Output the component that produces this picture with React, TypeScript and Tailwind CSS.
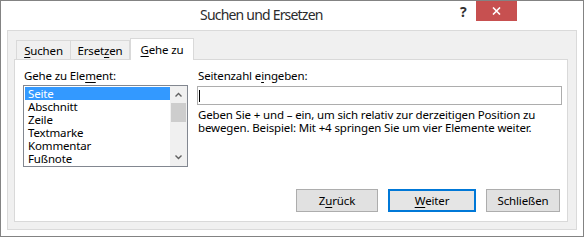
import { useState } from 'react'

const items = ['Seite', 'Abschnitt', 'Zeile', 'Textmarke', 'Kommentar', 'Fußnote']

function Tab({ hot, rest, before = '', active = false, w }: { hot: string; rest: string; before?: string; active?: boolean; w: string }) {
  return active ? (
    <div className={`relative z-10 -mb-px flex h-[22px] ${w} items-center justify-center border border-b-0 border-[#d9d9d9] bg-white pb-px`}>
      {before}
      <span className="underline underline-offset-2">{hot}</span>
      {rest}
    </div>
  ) : (
    <div className={`mt-[2px] flex h-[19px] ${w} items-center justify-center border border-b-0 border-[#d9d9d9] bg-[#f0f0f0] first:border-r-0`}>
      {before}
      <span className="underline underline-offset-2">{hot}</span>
      {rest}
    </div>
  )
}

function Chevron({ up }: { up?: boolean }) {
  return (
    <svg width="7" height="5" viewBox="0 0 7 5" className="text-[#606060]">
      <path d={up ? 'M0.5 4.5 L3.5 1.5 L6.5 4.5' : 'M0.5 0.5 L3.5 3.5 L6.5 0.5'} fill="none" stroke="currentColor" strokeWidth="1.4" />
    </svg>
  )
}

function Button({ children, primary = false, w }: { children: React.ReactNode; primary?: boolean; w: string }) {
  return (
    <button
      className={
        primary
          ? `flex h-[23px] ${w} items-center justify-center border-2 border-[#0078d7] bg-[#e5e5e5] text-black`
          : `flex h-[23px] ${w} items-center justify-center border border-[#adadad] bg-[#e1e1e1] text-black`
      }
    >
      {children}
    </button>
  )
}

export default function App() {
  const [selected, setSelected] = useState(0)

  return (
    <div className="flex h-[237px] w-[584px] flex-col border border-[#838383] bg-white font-['Noto_Sans',sans-serif] text-[11.5px] leading-[13px] tracking-[-0.15px] text-black">
      {/* title bar */}
      <div className="relative h-[29px] shrink-0">
        <span className="absolute left-[199px] top-[5px] text-[14px] leading-[18px] tracking-[-0.8px] text-[#2b2b2b]">
          Suchen und Ersetzen
        </span>
        <span className="absolute left-[459px] top-[4px] text-[14px] font-bold text-[#303030]">?</span>
        <div className="absolute left-[475px] top-0 flex h-[20px] w-[41px] items-center justify-center bg-[#c75050]">
          <svg width="9" height="8" viewBox="0 0 9 8">
            <path d="M1 0.5 L8 7.5 M8 0.5 L1 7.5" stroke="white" strokeWidth="1.6" />
          </svg>
        </div>
      </div>

      {/* dialog body */}
      <div className="mx-[6px] flex h-[200px] flex-col border border-[#dadada] bg-[#f0f0f0] pb-[7px] pl-[6px] pr-[8px] pt-[7px]">
        <div className="flex pl-[2px]">
          <Tab w="w-[54px]" hot="S" rest="uchen" />
          <Tab w="w-[60px]" before="Erset" hot="z" rest="en" />
          <Tab w="w-[64px]" hot="G" rest="ehe zu" active />
        </div>

        <div className="flex flex-1 flex-col border border-[#d9d9d9] bg-white pl-[8px] pr-[5px] pt-[9px]">
          <div className="flex gap-[9px]">
            <div className="flex w-[165px] flex-col">
              <div className="h-[15px] pl-px">
                Gehe zu Ele<span className="underline underline-offset-2">m</span>ent:
              </div>
              <div className="mt-px flex h-[82px] border border-[#828790] bg-white">
                <div className="flex flex-1 flex-col py-px pl-px">
                  {items.map((it, i) => (
                    <div
                      key={it}
                      onClick={() => setSelected(i)}
                      className={
                        i === selected
                          ? 'h-[13px] overflow-hidden bg-[#3399ff] pl-[3px] leading-[13px] text-white'
                          : 'h-[13px] overflow-hidden pl-[3px] leading-[13px] text-black'
                      }
                    >
                      {it}
                    </div>
                  ))}
                </div>
                <div className="flex w-[17px] flex-col items-center bg-[#f0f0f0]">
                  <div className="flex h-[17px] items-center justify-center">
                    <Chevron up />
                  </div>
                  <div className="h-[19px] w-[15px] bg-[#cdcdcd]" />
                  <div className="flex-1" />
                  <div className="flex h-[17px] items-center justify-center">
                    <Chevron />
                  </div>
                </div>
              </div>
            </div>

            <div className="flex w-[365px] flex-col">
              <div className="h-[15px] pl-px">
                Seitenzahl e<span className="underline underline-offset-2">i</span>ngeben:
              </div>
              <div className="mt-[2px] flex h-[19px] items-center border border-[#adadad] bg-white px-[1px]">
                <div className="h-[12px] w-px bg-black" />
              </div>
              <p className="mt-[3px] pl-px leading-[13px]">
                Geben Sie + und – ein, um sich relativ zur derzeitigen Position zu bewegen. Beispiel: Mit +4 springen Sie um vier Elemente weiter.
              </p>
            </div>
          </div>

          <div className="mb-[9px] mt-auto flex justify-end gap-[10px] pr-[2px]">
            <Button w="w-[82px]">
              Z<span className="underline underline-offset-2">u</span>rück
            </Button>
            <Button w="w-[88px]" primary>
              <span className="underline underline-offset-2">W</span>eiter
            </Button>
            <Button w="w-[74px]">Schließen</Button>
          </div>
        </div>
      </div>
    </div>
  )
}
